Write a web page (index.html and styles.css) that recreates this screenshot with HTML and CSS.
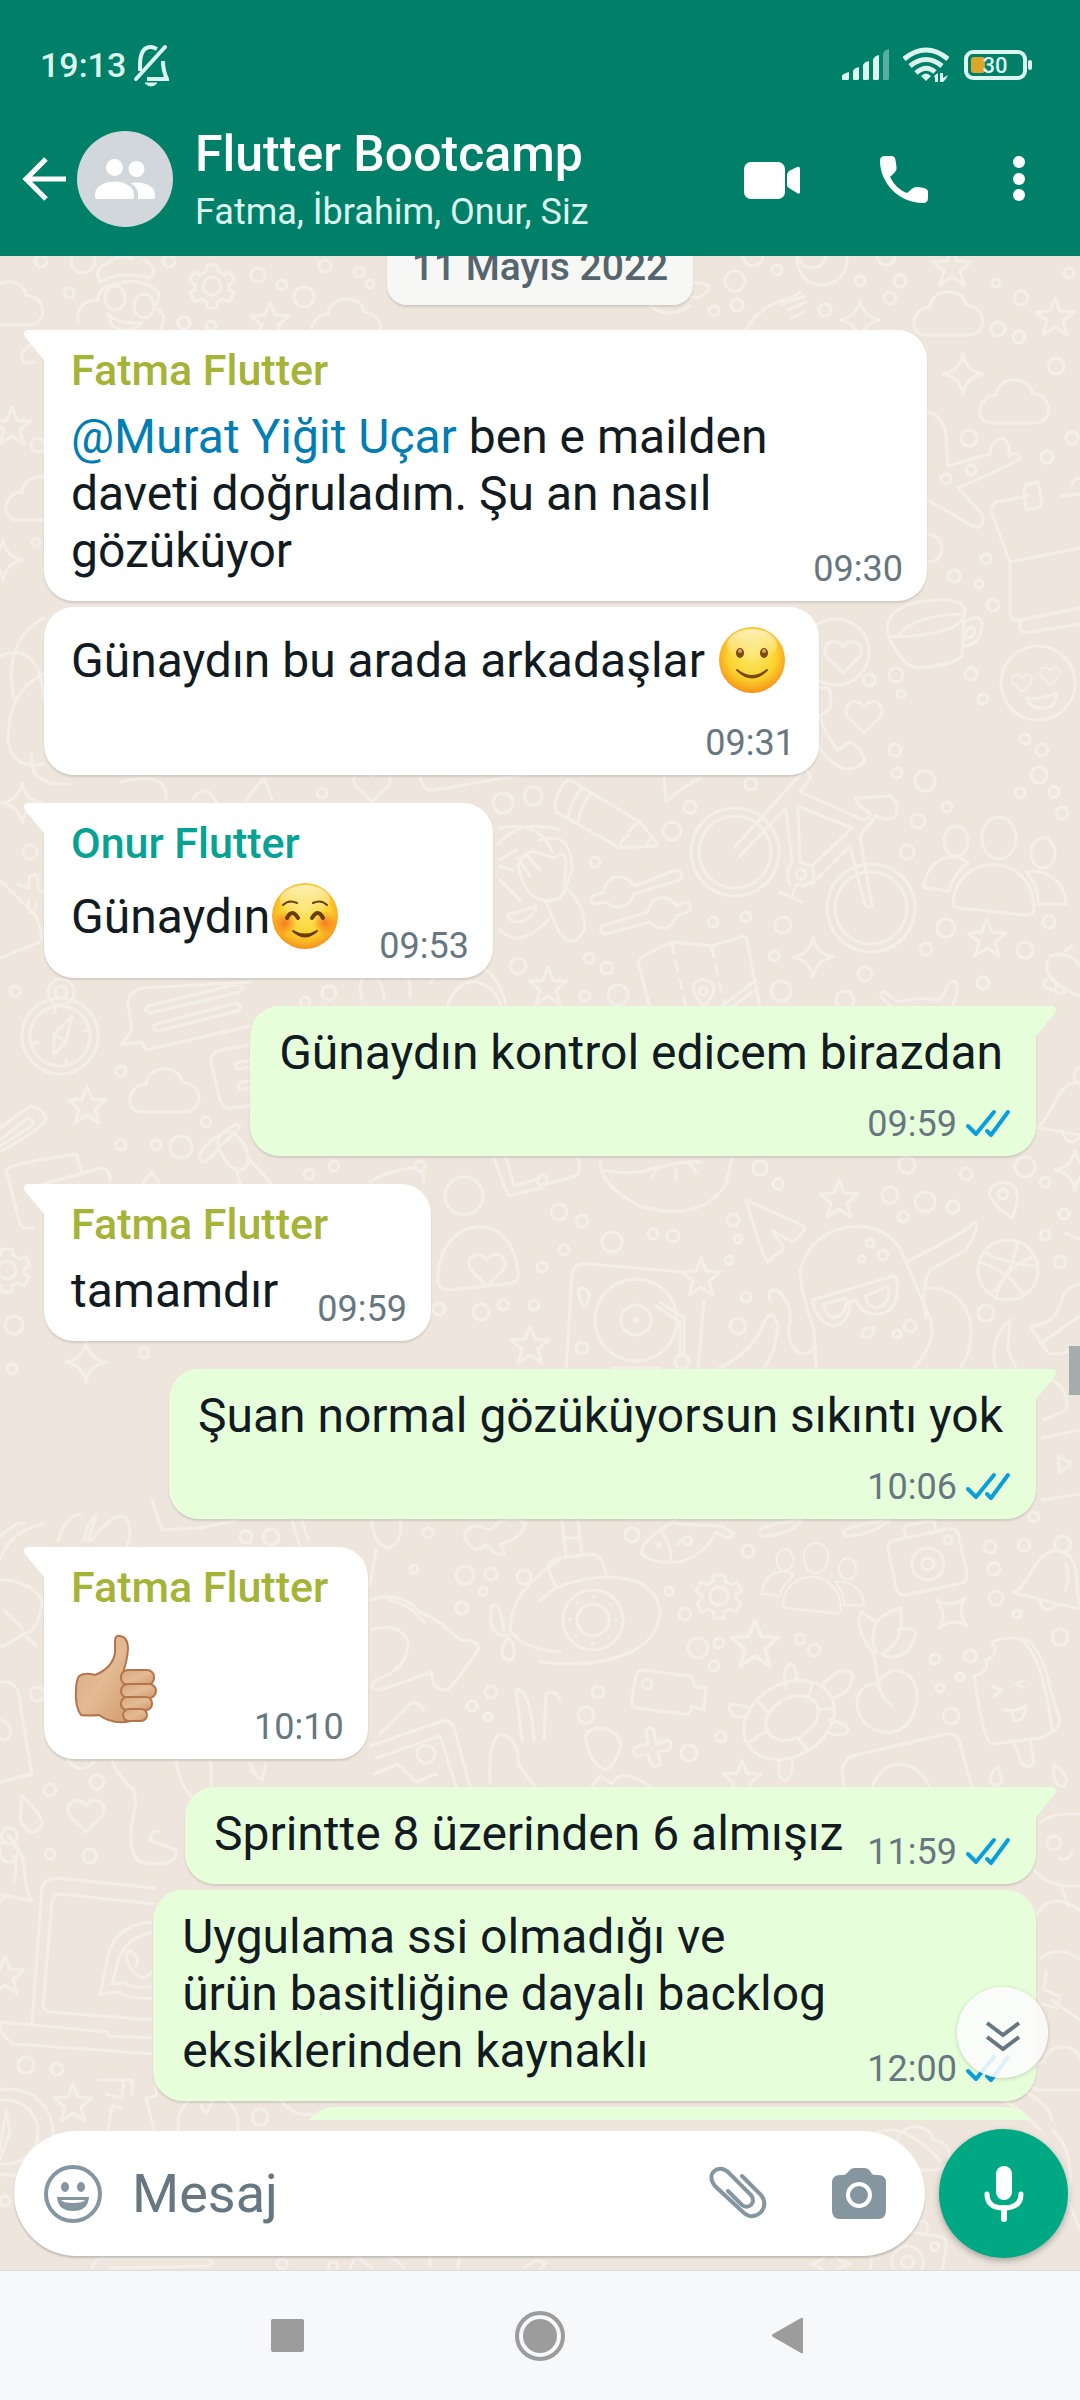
FILE: index.html
```html
<!DOCTYPE html>
<html lang="tr">
<head>
<meta charset="utf-8">
<meta name="viewport" content="width=device-width, initial-scale=1">
<title>Flutter Bootcamp</title>
<link rel="stylesheet" href="styles.css">
</head>
<body>
<svg class="defs" aria-hidden="true">
  <defs>
    <radialGradient id="face" cx="50%" cy="42%" r="60%">
      <stop offset="0" stop-color="#fbe66c"/><stop offset=".6" stop-color="#fbd42f"/><stop offset=".85" stop-color="#f9a91f"/><stop offset="1" stop-color="#f08a1c"/>
    </radialGradient>
    <linearGradient id="shine" x1="0" y1="0" x2="0" y2="1">
      <stop offset="0" stop-color="#fff" stop-opacity=".65"/><stop offset="1" stop-color="#fff" stop-opacity="0"/>
    </linearGradient>
    <radialGradient id="blush">
      <stop offset="0" stop-color="#f86a1c" stop-opacity=".85"/><stop offset="1" stop-color="#f86a1c" stop-opacity="0"/>
    </radialGradient>
    <linearGradient id="skin" x1="0" y1="0" x2="1" y2="1">
      <stop offset="0" stop-color="#d9a67c"/><stop offset=".5" stop-color="#e3bb94"/><stop offset="1" stop-color="#d29a6d"/>
    </linearGradient>
    <symbol id="ticks" viewBox="0 0 46 30">
      <path d="M3 17l8 8L29 3M22 22l4 4L43 3" fill="none" stroke="#0c9ddb" stroke-width="4" stroke-linecap="round" stroke-linejoin="round"/>
    </symbol>
    <path id="star" d="M0-20L5-7 19-6 8 3 12 17 0 9-12 17-8 3-19-6-5-7Z"/>
    <path id="spark" d="M0-20Q3-3 20 0Q3 3 0 20Q-3 3-20 0Q-3-3 0-20Z"/>
    <path id="cloud" d="M-24 20C-42 16-34-8-18-8C-16-28 16-28 18-10C40-8 40 20 20 20Z"/>
    <path id="heart" d="M0 18L-16 2C-24-10-8-20 0-8C8-20 24-10 16 2Z"/>
    <g id="gear"><path d="M-5-21H5L6-15 12-11 18-14 23-5 17-1V3L22 7 17 16 11 13 5 16V22H-5V16L-11 13-17 16-22 7-17 3V-1L-23-5-18-14-12-11-6-15Z"/><circle r="9"/></g>
    <g id="people"><ellipse cx="4" cy="-28" rx="17" ry="21"/><ellipse cx="-39" cy="-25" rx="12" ry="15"/><ellipse cx="48" cy="-13" rx="12" ry="15"/><path d="M-42 37C-38-15 36-15 39 41C40 48 36 49 30 49L-36 42Q-42 41-42 37ZM-71 20C-68-8-40-16-27-3Q-42 8-46 25L-66 22Q-72 22-71 20ZM31 6C50 2 70 14 71 38L43 38Q44 20 31 6Z"/></g>
    <g id="camera"><rect x="-36" y="-26" width="72" height="56" rx="8"/><path d="M-16-26V-34Q-16-38-11-38H10Q15-38 15-34V-26"/><circle cy="4" r="16"/><circle cy="4" r="6"/><circle cx="25" cy="-15" r="4"/></g>
    <g id="bell"><path d="M-36 24C-20 12-26-26 0-28C26-26 20 12 36 24Z"/><circle cy="-35" r="8"/><path d="M-9 25Q0 40 9 25M8-16Q16-6 14 10"/></g>
  </defs>
</svg>
<div class="app">
  <header class="top">
    <div class="status">
      <span class="clock">19:13</span>
      <svg class="mute" viewBox="0 0 36 48" aria-label="Sessiz"><path d="M7 30V24C7 14 10 6 18 6C20 6 22 7 24 8M30 20C30 26 32 34 34 38H14" fill="none" stroke="#dcf5ef" stroke-width="4"/><path d="M3 38L32 6" stroke="#dcf5ef" stroke-width="4" stroke-linecap="round"/><path d="M12 42H24Q18 48 12 42" fill="#dcf5ef" stroke="#dcf5ef"/></svg>
      <svg class="signal" viewBox="0 0 48 32" aria-label="Sinyal"><g fill="#dcf5ef"><path d="M0 30V27Q0 25 7 23V30Q7 31 5 31H1Q0 31 0 30ZM11 30V22Q12 19 17 18V30Q17 31 15 31H12Q11 31 11 30ZM21 30V16Q22 13 27 12V30Q27 31 25 31H22Q21 31 21 30ZM31 30V11Q32 7 37 6V30Q37 31 35 31H32Q31 31 31 30Z"/><path opacity=".4" d="M41 30V5Q42 1 47 0V30Q47 31 45 31H42Q41 31 41 30Z"/></g></svg>
      <svg class="wifi" viewBox="0 0 46 36" aria-label="Wi-Fi"><g fill="none" stroke="#dcf5ef" stroke-width="5"><path d="M1 12Q23-6 45 12M7 19Q23 6 39 19M13 26Q23 17 32 25"/></g><path d="M23 34L18 29Q23 24 28 29ZM31 29L35 26V35H32V31ZM37 35V26H40V31L45 28Q43 33 40 35Z" fill="#dcf5ef"/></svg>
      <svg class="battery" viewBox="0 0 70 32" aria-label="Pil"><rect x="3" y="3" width="59" height="26" rx="7" fill="none" stroke="#dcf5ef" stroke-width="4"/><rect x="8" y="8" width="14" height="16" rx="3" fill="#dea52b"/><rect x="65" y="11" width="4" height="10" rx="2" fill="#dcf5ef"/><text x="32" y="24" text-anchor="middle">30</text></svg>
    </div>
    <div class="bar">
      <button class="back" aria-label="Geri"><svg viewBox="0 0 44 44"><path d="M24 2L4 22L24 42M4 22H44" fill="none" stroke="#fff" stroke-width="5"/></svg></button>
      <svg class="avatar" viewBox="0 0 96 96" aria-hidden="true"><circle cx="48" cy="48" r="48" fill="#d1d7db"/><g fill="#fff"><circle cx="37.500" cy="36.500" r="8.500"/><circle cx="59.500" cy="38" r="8"/><path d="M18 64C18 46 57 46 57 64V66Q57 68 55 68H20Q18 68 18 66ZM61 68Q63 58 54 52C66 50 78 55 78 63V66Q78 68 76 68Z"/></g></svg>
      <div class="titles">
        <h1>Flutter Bootcamp</h1>
        <p>Fatma, İbrahim, Onur, Siz</p>
      </div>
      <button class="act" aria-label="Görüntülü arama"><svg viewBox="0 0 60 60"><rect x="2" y="13" width="41" height="37" rx="7" fill="#fff"/><path d="M45 26Q45 24 47 22L55 18Q58 17 58 20V43Q58 46 55 44L47 39Q45 38 45 36Z" fill="#fff"/></svg></button>
      <button class="act" aria-label="Sesli arama"><svg viewBox="0 0 60 60"><path d="M11 7H17Q21 7 21.500 11L22.500 18Q23 21 21 23L16 28Q22 40 33 44L39 39Q41 38 44 38L50 39Q54 40 54 43V49Q54 54 49 54C25 54 6 34 6 12Q6 7 11 7Z" fill="#fff"/></svg></button>
      <button class="act act-menu" aria-label="Diğer seçenekler"><svg viewBox="0 0 26 60"><g fill="#fff"><circle cx="13" cy="13" r="6"/><circle cx="13" cy="30" r="6"/><circle cx="13" cy="46" r="6"/></g></svg></button>
    </div>
  </header>

  <main class="chat">
    <svg class="wallpaper" viewBox="0 256 1080 2014" preserveAspectRatio="xMidYMin slice" aria-hidden="true">
      <g fill="none" stroke="#f4eee8" stroke-width="3" stroke-linejoin="round" stroke-linecap="round">
        <!-- loose dots -->
        <circle cx="41" cy="261" r="6"/><circle cx="83" cy="261" r="12"/><circle cx="169" cy="261" r="6"/><circle cx="258" cy="275" r="7"/><circle cx="282" cy="285" r="5"/><circle cx="325" cy="266" r="6"/><circle cx="359" cy="272" r="5"/><circle cx="370" cy="284" r="4"/><circle cx="304" cy="297" r="10"/><circle cx="69" cy="293" r="5"/><circle cx="184" cy="323" r="6"/><circle cx="211" cy="326" r="5"/>
        <circle cx="753" cy="256" r="10"/><circle cx="777" cy="270" r="5"/><circle cx="735" cy="281" r="10"/><circle cx="822" cy="260" r="25"/><circle cx="812" cy="254" r="14"/><circle cx="860" cy="281" r="5"/><circle cx="900" cy="281" r="6"/><circle cx="890" cy="298" r="6"/><circle cx="825" cy="310" r="6"/><circle cx="737" cy="305" r="6"/><circle cx="714" cy="311" r="5"/><circle cx="1021" cy="298" r="7"/><circle cx="1069" cy="273" r="5"/><circle cx="996" cy="283" r="4"/><circle cx="886" cy="256" r="9"/>
        <circle cx="998" cy="329" r="7"/><circle cx="1019" cy="337" r="6"/><circle cx="1056" cy="366" r="8"/><circle cx="969" cy="438" r="8"/><circle cx="1072" cy="438" r="6"/><circle cx="1047" cy="457" r="6"/><circle cx="971" cy="470" r="5"/><circle cx="946" cy="479" r="5"/><circle cx="986" cy="559" r="5"/><circle cx="954" cy="576" r="6"/><circle cx="979" cy="584" r="4"/><circle cx="993" cy="605" r="6"/><circle cx="869" cy="680" r="6"/><circle cx="896" cy="675" r="7"/><circle cx="901" cy="694" r="4"/><circle cx="971" cy="674" r="6"/><circle cx="983" cy="699" r="5"/><circle cx="1025" cy="739" r="5"/><circle cx="1042" cy="750" r="6"/><circle cx="895" cy="750" r="6"/><circle cx="897" cy="773" r="5"/><circle cx="925" cy="781" r="10"/><circle cx="1039" cy="775" r="8"/><circle cx="1020" cy="793" r="5"/><circle cx="1054" cy="792" r="5"/>
        <circle cx="751" cy="784" r="6"/><circle cx="533" cy="796" r="9"/><circle cx="503" cy="803" r="10"/><circle cx="690" cy="807" r="6"/><circle cx="672" cy="831" r="9"/><circle cx="595" cy="862" r="5"/><circle cx="947" cy="807" r="5"/><circle cx="918" cy="821" r="7"/><circle cx="1062" cy="813" r="6"/><circle cx="907" cy="852" r="7"/><circle cx="713" cy="922" r="5"/><circle cx="746" cy="917" r="5"/><circle cx="783" cy="925" r="8"/><circle cx="774" cy="956" r="5"/><circle cx="946" cy="928" r="9"/><circle cx="926" cy="949" r="6"/><circle cx="1049" cy="922" r="6"/><circle cx="1025" cy="950" r="8"/><circle cx="589" cy="958" r="5"/><circle cx="607" cy="968" r="6"/><circle cx="518" cy="966" r="8"/><circle cx="585" cy="996" r="5"/><circle cx="618" cy="995" r="10"/><circle cx="781" cy="991" r="10"/><circle cx="865" cy="974" r="7"/><circle cx="983" cy="983" r="6"/><circle cx="845" cy="1000" r="9"/>
        <circle cx="760" cy="1168" r="7"/><circle cx="907" cy="1165" r="8"/><circle cx="966" cy="1174" r="6"/><circle cx="1025" cy="1167" r="10"/><circle cx="1045" cy="1182" r="5"/><circle cx="890" cy="1195" r="8"/><circle cx="925" cy="1202" r="10"/><circle cx="953" cy="1207" r="6"/><circle cx="903" cy="1217" r="5"/><circle cx="1064" cy="1214" r="5"/><circle cx="778" cy="1184" r="5"/><circle cx="559" cy="1212" r="8"/><circle cx="582" cy="1221" r="6"/><circle cx="653" cy="1234" r="5"/><circle cx="673" cy="1236" r="6"/><circle cx="612" cy="1242" r="10"/><circle cx="733" cy="1220" r="6"/><circle cx="738" cy="1239" r="4"/><circle cx="729" cy="1260" r="4"/><circle cx="564" cy="1250" r="5"/><circle cx="746" cy="1297" r="5"/><circle cx="738" cy="1326" r="8"/><circle cx="582" cy="1348" r="6"/><circle cx="986" cy="1313" r="8"/><circle cx="1045" cy="1235" r="5"/><circle cx="1060" cy="1262" r="6"/>
        <circle cx="632" cy="1535" r="7"/><circle cx="748" cy="1551" r="6"/><circle cx="669" cy="1591" r="4"/><circle cx="685" cy="1614" r="6"/><circle cx="698" cy="1648" r="10"/><circle cx="719" cy="1643" r="5"/><circle cx="714" cy="1666" r="5"/><circle cx="800" cy="1639" r="5"/><circle cx="814" cy="1650" r="6"/><circle cx="598" cy="1692" r="6"/><circle cx="586" cy="1715" r="8"/><circle cx="721" cy="1737" r="5"/><circle cx="689" cy="1753" r="8"/><circle cx="990" cy="1547" r="6"/><circle cx="1024" cy="1545" r="6"/><circle cx="994" cy="1569" r="6"/><circle cx="996" cy="1598" r="7"/><circle cx="1017" cy="1614" r="4"/><circle cx="1060" cy="1637" r="8"/><circle cx="935" cy="1659" r="5"/><circle cx="970" cy="1656" r="6"/><circle cx="960" cy="1677" r="4"/><circle cx="940" cy="1688" r="4"/><circle cx="951" cy="1716" r="8"/><circle cx="1034" cy="1517" r="5"/>
        <circle cx="322" cy="793" r="5"/><circle cx="30" cy="852" r="7"/><circle cx="15" cy="991" r="5"/><circle cx="329" cy="993" r="7"/><circle cx="305" cy="1002" r="5"/><circle cx="121" cy="1071" r="5"/><circle cx="206" cy="1122" r="5"/><circle cx="121" cy="1145" r="5"/><circle cx="156" cy="1145" r="5"/><circle cx="181" cy="1147" r="11"/><circle cx="309" cy="1174" r="5"/><circle cx="334" cy="1166" r="5"/><circle cx="420" cy="1166" r="5"/><circle cx="542" cy="1180" r="5"/><circle cx="542" cy="1267" r="5"/><circle cx="439" cy="1309" r="6"/><circle cx="481" cy="1312" r="8"/><circle cx="503" cy="1305" r="5"/><circle cx="534" cy="1305" r="5"/><circle cx="14" cy="1325" r="9"/><circle cx="144" cy="1353" r="5"/><circle cx="12" cy="1369" r="5"/>
        <circle cx="246" cy="1537" r="6"/><circle cx="271" cy="1537" r="8"/><circle cx="428" cy="1533" r="5"/><circle cx="414" cy="1569" r="4"/><circle cx="465" cy="1575" r="9"/><circle cx="491" cy="1574" r="6"/><circle cx="524" cy="1577" r="7"/><circle cx="483" cy="1591" r="4"/><circle cx="462" cy="1608" r="6"/><circle cx="491" cy="1692" r="6"/><circle cx="472" cy="1706" r="5"/><circle cx="488" cy="1717" r="4"/><circle cx="50" cy="1790" r="6"/><circle cx="97" cy="1782" r="7"/><circle cx="50" cy="1854" r="5"/><circle cx="90" cy="1856" r="7"/><circle cx="37" cy="1694" r="7"/><circle cx="26" cy="2065" r="8"/><circle cx="57" cy="2069" r="6"/><circle cx="260" cy="2117" r="8"/><circle cx="5" cy="2201" r="5"/><circle cx="282" cy="2264" r="5"/><circle cx="333" cy="2267" r="5"/><circle cx="36" cy="542" r="4"/><circle cx="38" cy="445" r="7"/>
        <!-- stars and sparkles -->
        <use href="#star" x="270" y="322"/><use href="#star" x="952" y="268"/><use href="#star" x="1055" y="318"/><use href="#star" x="12" y="427"/><use href="#star" x="987" y="939"/><use href="#star" x="548" y="987"/><use href="#star" x="87" y="1106"/><use href="#star" x="530" y="1346"/><use href="#star" x="839" y="1200"/><use href="#star" x="701" y="1278"/><use href="#star" transform="translate(755 1645) scale(1.25)"/><use href="#star" x="5" y="1976"/><use href="#star" x="73" y="2104"/><use href="#star" x="742" y="1780"/>
        <use href="#spark" x="860" y="320"/><use href="#spark" x="963" y="374"/><use href="#spark" x="813" y="957"/><use href="#spark" x="22" y="803"/><use href="#spark" x="86" y="1362"/><use href="#spark" transform="translate(952 1613) rotate(40)"/><use href="#spark" x="3" y="560"/><use href="#spark" x="1075" y="1170"/><use href="#spark" x="830" y="2264"/>
        <!-- clouds, hearts, gears -->
        <use href="#cloud" x="8" y="305"/><use href="#cloud" x="346" y="322"/><use href="#cloud" x="948" y="315"/><use href="#cloud" x="1014" y="403"/><use href="#cloud" x="164" y="1092"/><use href="#cloud" x="40" y="500"/><use href="#cloud" x="1062" y="2070"/><use href="#cloud" x="915" y="2150"/>
        <use href="#heart" x="843" y="655"/><use href="#heart" x="864" y="715"/><use href="#heart" x="86" y="1814"/><use href="#heart" x="487" y="1268"/><use href="#heart" x="372" y="784"/>
        <use href="#gear" x="212" y="286"/><use href="#gear" x="7" y="1270"/><use href="#gear" x="719" y="1596"/>
        <!-- people, cameras, bells -->
        <use href="#people" x="995" y="866"/><use href="#people" transform="translate(813 1578) scale(.72)"/>
        <use href="#camera" transform="translate(927 1560) rotate(-12)"/><use href="#camera" transform="translate(908 2258) rotate(8)"/>
        <use href="#bell" transform="translate(1054 1578) rotate(14)"/><use href="#bell" transform="translate(2 1870) rotate(12)"/><use href="#bell" transform="translate(1076 1110) rotate(10)"/>
        <!-- cupcake -->
        <path d="M100 282Q92 268 110 262Q116 254 132 258M100 282Q120 270 150 278Q160 268 144 260M78 322Q76 300 98 300M98 300Q98 286 116 284Q140 276 158 292Q160 302 154 308Q170 314 160 330"/><ellipse cx="115" cy="298" rx="10" ry="12"/><ellipse cx="144" cy="306" rx="10" ry="12"/><path d="M108 314Q120 326 142 322Q132 336 112 326Z"/>
        <!-- spoon and ring -->
        <path d="M746 330Q758 306 790 298L800 292M782 304L804 296M788 310L806 302M792 318L804 312M685 282Q706 282 710 288Q700 302 690 296M650 306Q668 320 690 306"/>
        <!-- tulip, letter and calendar -->
        <path d="M928 412Q944 416 946 436L948 466L990 454Q990 440 1004 438Q1012 448 1008 456Q1018 450 1020 458Q1014 464 958 488L982 514Q986 526 976 528L928 500M928 534Q942 536 942 550Q940 562 928 562"/>
        <path d="M1080 494L1062 496M1028 496L996 502Q990 506 992 514L1010 562V612Q1010 622 1020 620L1080 608M1010 562L1080 548M1020 620V628Q1022 634 1030 632L1080 624M1024 490Q1024 484 1030 484L1038 482L1042 504Q1040 508 1034 508L1026 510ZM1072 484Q1074 478 1080 478"/>
        <!-- mug -->
        <path d="M888 634C884 612 904 602 936 600C960 598 970 606 962 620C950 634 910 638 888 636ZM898 636Q912 616 960 614M888 636Q904 668 918 668Q950 666 962 656L964 620M964 622Q980 612 982 624Q982 644 964 646M966 634Q966 626 974 628Q976 638 966 638Z"/>
        <!-- love-struck face and handset -->
        <circle cx="1038" cy="683" r="37"/><use href="#heart" transform="translate(1022 682) scale(.55)"/><use href="#heart" transform="translate(1050 675) scale(.55)"/><path d="M1026 698Q1040 700 1056 693Q1058 706 1044 708Q1032 710 1026 698Z"/>
        <circle cx="836" cy="652" r="33"/><path d="M818 688H828Q832 692 830 708L820 716Q824 734 838 750L850 742Q860 746 865 760Q856 772 842 768Q824 760 816 740"/>
        <!-- pencil -->
        <path d="M570 780L640 822L656 842Q658 848 650 846L620 848L556 812Q552 804 562 786Q566 780 570 780ZM640 822Q630 826 628 836Q620 840 620 848M592 792Q580 806 578 822M582 788Q570 802 568 818M648 844L652 836"/>
        <path d="M664 776L666 802Q686 784 700 778"/>
        <!-- bicycle -->
        <circle cx="735" cy="852" r="44"/><circle cx="735" cy="852" r="36"/><circle cx="871" cy="908" r="44"/><circle cx="871" cy="908" r="36"/>
        <path d="M734 848L804 770Q812 772 810 778L800 792L864 820Q874 816 868 812M868 812Q854 802 856 798L890 796Q900 802 896 816Q890 822 876 816L860 836L872 906Q868 910 864 902L850 846L812 884M798 806L852 828L812 866L800 862ZM786 810L792 862M740 856L786 808"/><circle cx="801" cy="874" r="5"/><path d="M792 862Q784 872 790 884M812 868Q818 880 804 886L796 884M780 892L802 902M796 884L792 898"/>
        <!-- sliders -->
        <path d="M592 896L604 892C606 872 628 874 634 886L676 870Q686 872 680 880L634 894C628 912 612 908 606 902L594 904Q588 900 592 896ZM602 926L648 912C652 892 672 896 676 906L686 902Q694 906 688 912L676 916C672 932 656 930 650 922L606 934Q598 932 602 926Z"/>
        <!-- waving grandma -->
        <path d="M500 828Q540 820 552 852M540 840Q572 830 572 870L566 886Q562 904 542 900Q524 896 518 866Q524 850 536 852L554 858Q564 850 566 860L564 886Q588 908 584 930Q572 952 558 930L546 902M518 858L530 876M526 854L540 870M500 866L512 870M508 914Q520 912 536 906Q532 922 516 922Q508 920 508 914M500 930Q520 950 548 920"/>
        <!-- map -->
        <path d="M650 1008L638 962Q640 956 672 942L712 946L744 936Q748 938 748 946L760 1008M722 1006L756 980M730 1008L758 988"/><path d="M672 944L686 1008M712 948L724 1004" stroke-dasharray="9 9"/><path d="M703 1006Q690 990 694 984Q704 974 714 986Q714 998 703 1006Z"/><circle cx="703" cy="991" r="4"/>
        <path d="M894 1008Q874 994 884 992L898 1002Q920 996 940 1000L950 982Q960 978 956 996L952 1008M1050 956Q1070 950 1080 966M1048 960Q1040 980 1080 996M1064 952L1072 946M1046 980Q1040 986 1052 990M1056 986Q1052 996 1064 992"/>
        <!-- compass -->
        <circle cx="60" cy="1036" r="38"/><circle cx="60" cy="1036" r="30"/><circle cx="61" cy="992" r="13"/><circle cx="61" cy="992" r="6"/><path d="M72 1016L66 1042L54 1054L54 1034ZM54 1034L66 1042M55 1006V1012M32 1043L38 1042M84 1031L90 1030M66 1060V1066"/>
        <!-- speech bubbles -->
        <path d="M250 982L142 988Q128 992 128 1004L132 1030L122 1044L142 1042L146 1050L250 1026M148 1006L238 984Q246 988 240 992L150 1013Q142 1010 148 1006ZM156 1024L236 1003Q244 1006 238 1011L158 1031Q150 1028 156 1024ZM256 1044L220 1050Q208 1054 212 1066L220 1100Q224 1110 232 1108L260 1104M256 1060L238 1062Q232 1066 238 1069L256 1066M256 1080L240 1082Q236 1088 242 1090L256 1086"/>
        <path d="M0 1128L30 1106Q44 1108 46 1120Q42 1128 0 1152M0 1140L28 1118Q36 1120 32 1126L0 1146"/>
        <!-- dragonfly and cards -->
        <path d="M200 1160Q196 1154 214 1138L236 1124Q242 1124 238 1130L220 1146Q204 1168 200 1160ZM218 1142Q218 1130 232 1132Q250 1146 248 1164Q240 1176 230 1166Q218 1152 218 1142ZM236 1168L240 1184M248 1158L272 1184M6 1170Q8 1164 76 1154L82 1172M6 1170L20 1224Q24 1230 34 1228M30 1188L100 1168Q110 1168 110 1180M142 1184L152 1172L160 1184M370 1182Q380 1174 410 1168Q424 1168 424 1182M494 1158L508 1196L542 1188M506 1158L514 1186L540 1178"/>
        <circle cx="464" cy="1196" r="19"/><path d="M438 1276C440 1216 512 1206 518 1272Q520 1284 504 1284L450 1290Q436 1290 438 1276Z"/>
        <!-- upper left scribbles -->
        <path d="M44 336Q26 346 22 354Q20 366 34 362M44 618Q2 640 14 700M0 656Q40 640 44 700M44 674Q8 690 8 740Q12 770 44 764M32 752Q26 786 70 784M120 782Q170 770 166 800M192 800Q206 780 216 802M246 800L264 778L272 800M420 778Q424 792 434 790L540 772M0 880L36 916Q44 936 40 942L0 958M18 884L28 888L30 876Q36 872 38 880L38 890L44 892M28 900L30 912Q36 912 36 904"/>
        <path d="M498 844Q520 818 560 830M500 860L516 850M500 880L520 900M430 983Q452 956 486 970Q500 980 506 1004M448 1004Q458 980 476 982Q494 986 500 1004M362 1000Q356 974 372 974Q384 982 384 1000M396 968Q412 972 410 996"/>
        <!-- lips and wave -->
        <path d="M600 1162Q600 1186 640 1206Q700 1224 726 1184L732 1158M602 1170Q630 1176 656 1168Q690 1160 700 1162M652 1178L656 1168M676 1180V1170M696 1172L690 1164M540 1186L576 1176Q582 1170 578 1158"/>
        <!-- turntable -->
        <path d="M566 1370L572 1274Q574 1262 588 1264L684 1272M704 1300L698 1370M612 1368H660"/><circle cx="636" cy="1320" r="41"/><circle cx="636" cy="1320" r="15"/><circle cx="636" cy="1320" r="2"/><path d="M660 1302L684 1318V1354M656 1306L680 1322V1354M582 1288Q576 1290 580 1298Q582 1308 586 1306Q594 1290 582 1288"/><circle cx="682" cy="1362" r="7"/>
        <!-- paper plane -->
        <path d="M746 1200L804 1226Q806 1232 792 1242L772 1230L784 1248L768 1262Q764 1262 746 1200Z"/>
        <!-- cool ghost -->
        <path d="M816 1368L814 1330Q800 1290 800 1270Q812 1228 860 1226Q896 1230 906 1262L930 1318Q938 1340 914 1368M906 1262Q970 1230 974 1222Q982 1224 966 1250L930 1270Q920 1290 926 1318M926 1288Q960 1286 970 1320Q974 1350 960 1368M812 1300L894 1276Q900 1280 896 1300Q890 1316 872 1314Q860 1312 856 1300L850 1302Q850 1322 834 1326Q818 1324 812 1300ZM824 1304L846 1298Q848 1314 834 1318Q824 1314 824 1304ZM866 1296L888 1286Q892 1304 876 1308Q866 1306 866 1296Z"/><circle cx="870" cy="1243" r="4"/><circle cx="883" cy="1255" r="5"/><circle cx="862" cy="1259" r="3"/><circle cx="910" cy="1326" r="6"/><circle cx="897" cy="1334" r="4"/><path d="M862 1336Q862 1326 874 1328Q872 1342 862 1336ZM770 1300Q766 1290 776 1290Q792 1300 790 1322Q784 1340 800 1354Q812 1354 816 1344M716 1370Q756 1350 764 1322Q772 1306 778 1326L774 1350L764 1368"/>
        <!-- basketball and pin -->
        <circle cx="1008" cy="1270" r="30"/><path d="M1018 1242Q1010 1280 990 1294M980 1262Q1010 1272 1024 1296M984 1252Q1000 1262 1036 1266M1034 1256Q1000 1270 996 1298"/><path d="M1012 1218Q986 1200 990 1190Q1000 1176 1016 1188Q1020 1200 1012 1218Z"/><circle cx="1003" cy="1194" r="5"/>
        <path d="M1030 1326Q1054 1326 1062 1300Q1064 1288 1080 1284M1030 1326L1046 1350Q1052 1360 1080 1346M1040 1344L1080 1316M1010 1320Q988 1340 996 1368M1010 1320L1008 1350L1016 1368M1064 1232L1080 1240M1058 1456L1072 1464L1060 1472ZM1042 1438L1080 1430M1042 1500L1080 1494M1052 1380Q1070 1390 1066 1410L1044 1420"/>
        <!-- submarine -->
        <path d="M540 1600L556 1588L548 1568Q548 1560 560 1558L590 1554Q604 1554 606 1576M556 1588C600 1570 656 1572 660 1612C658 1650 610 1670 540 1662M566 1556L562 1520M582 1554L578 1520M564 1538H578"/><circle cx="593" cy="1620" r="30"/><circle cx="593" cy="1620" r="16"/><circle cx="593" cy="1620" r="23" stroke-dasharray="1 17"/>
        <!-- fish -->
        <path d="M642 1554Q640 1544 660 1530L676 1520M642 1554Q652 1564 680 1562Q706 1554 716 1532Q730 1542 734 1534L722 1526L676 1524M660 1530Q674 1548 670 1562M678 1544Q690 1530 692 1542Q686 1548 684 1542M760 1532Q756 1526 800 1520M760 1536Q790 1536 802 1520M844 1534Q840 1526 890 1520M846 1536Q870 1536 890 1520"/><circle cx="659" cy="1545" r="2"/>
        <!-- camcorder -->
        <path d="M642 1670L690 1676Q694 1678 694 1686L706 1688L704 1710L692 1706Q690 1716 684 1714L636 1708Q630 1706 632 1698L636 1676Q638 1670 642 1670Z"/><circle cx="647" cy="1684" r="5"/>
        <!-- turtle -->
        <ellipse cx="789" cy="1720" rx="48" ry="36" transform="rotate(-30 789 1720)"/><ellipse cx="792" cy="1718" rx="28" ry="20" transform="rotate(-30 792 1718)"/><path d="M823 1684Q846 1662 853 1676Q850 1694 833 1698M786 1688Q782 1664 792 1664Q798 1670 796 1682M750 1708Q724 1700 730 1710Q734 1720 746 1716M830 1720Q850 1724 848 1732Q842 1738 826 1732M780 1760Q776 1780 786 1780Q794 1776 792 1758M812 1684L808 1698M834 1708L818 1710M808 1750L798 1738M750 1742L768 1730M758 1702L770 1714"/>
        <!-- sprout -->
        <path d="M878 1684C892 1656 924 1676 916 1706C908 1738 880 1738 864 1722C848 1700 862 1682 878 1684Q880 1696 892 1706M878 1684L874 1654Q852 1626 862 1612L876 1622Q886 1612 900 1608Q906 1640 882 1654M898 1630Q914 1626 916 1634Q908 1662 884 1656M876 1622Q870 1640 876 1652"/>
        <!-- popsicle -->
        <path d="M974 1676Q990 1672 986 1660Q1000 1654 992 1642Q1010 1634 1030 1642Q1044 1656 1050 1688L1060 1720Q1060 1730 1040 1738L992 1744Q984 1744 974 1676ZM1018 1638Q1042 1650 1052 1730M1014 1742L1022 1764Q1030 1770 1034 1762L1030 1740M992 1686L1002 1690L994 1696M1024 1680L1016 1684L1024 1688M1004 1710Q1016 1712 1026 1706Q1024 1724 1014 1720L1012 1712"/>
        <path d="M844 1788L842 1770Q844 1760 852 1756L946 1734Q958 1732 960 1744L972 1788M872 1788Q880 1764 902 1764Q922 1768 930 1788M998 1766L1002 1782Q998 1788 992 1784Q986 1778 998 1766ZM1054 1764Q1072 1778 1064 1786Q1052 1788 1054 1764ZM592 1786L600 1776L612 1784Q620 1766 650 1786M586 1740Q584 1728 604 1728Q624 1736 620 1750Q612 1770 604 1770Q590 1762 586 1740ZM646 1730Q652 1724 654 1732L656 1744L668 1740Q674 1744 668 1750L658 1752L660 1764Q654 1770 650 1762L648 1754L636 1756Q630 1750 638 1746L648 1744Z"/>
        <!-- winking cat -->
        <path d="M1040 1822Q1054 1812 1080 1814M1034 1870Q1050 1888 1080 1886M1062 1888L1068 1906"/><circle cx="1054" cy="1843" r="7"/><path d="M1060 1858Q1068 1862 1072 1852M1036 1916Q1050 1890 1080 1910"/>
        <!-- whale, hands, pictures -->
        <path d="M370 1600Q400 1590 420 1612Q440 1620 460 1640Q480 1640 478 1650Q464 1672 448 1690Q430 1690 432 1672L380 1690Q366 1690 376 1680Q410 1668 408 1640Q396 1622 372 1630M390 1600Q412 1606 424 1622M560 1560Q510 1590 510 1630Q524 1650 560 1652M508 1636Q486 1636 492 1606Q500 1600 504 1630M506 1640Q496 1660 512 1660Q518 1646 508 1638"/>
        <path d="M380 1734L410 1704Q416 1700 424 1710M370 1746L440 1722Q450 1718 454 1728L470 1786M376 1758L440 1736L456 1786M374 1774L398 1764L416 1782L436 1774"/><circle cx="426" cy="1754" r="9"/><path d="M490 1784Q488 1740 500 1734Q520 1738 518 1764L536 1788M522 1740L516 1690Q526 1686 532 1720L534 1740M544 1740L546 1694Q554 1688 560 1700M372 1522Q374 1546 390 1548Q404 1540 400 1520M376 1550L370 1584M464 1536Q470 1520 490 1530Q510 1510 526 1524Q520 1540 500 1544Q510 1560 494 1552L486 1544Q474 1558 464 1536ZM292 1520L300 1548M302 1520L308 1540M152 1500L162 1530L200 1528Q230 1522 236 1520"/>
        <path d="M0 1560Q10 1530 44 1524M0 1536Q20 1520 24 1524M58 1540Q66 1516 80 1514M84 1540Q88 1520 96 1516L88 1540Q90 1544 100 1530Q130 1500 130 1536Q126 1560 100 1560M0 1580Q30 1580 42 1600Q40 1630 24 1634L0 1648M24 1634L36 1646M4 1610L22 1628M0 1682Q20 1680 20 1704L32 1774L0 1782M0 1720Q14 1724 10 1736Q6 1742 0 1738M112 1760Q120 1780 134 1790L136 1804Q124 1850 140 1862Q180 1868 176 1850L150 1840Q152 1828 160 1832M176 1760Q180 1790 196 1800M210 1760Q214 1780 208 1800M68 1760Q80 1776 94 1762M22 1796Q44 1816 42 1826Q30 1840 20 1820ZM8 1836Q24 1850 14 1862Q0 1864 0 1850M250 1770L262 1780L266 1764M250 1764L258 1778"/>
        <!-- laptop -->
        <path d="M154 1888L58 1878Q44 1878 42 1888L32 2022M154 1904L60 1894Q54 1894 52 1902L43 2006Q44 2010 50 2012L154 2020M154 2038L108 2036V2032L0 2022Q0 2036 14 2044L154 2054"/><path d="M154 1922Q110 1924 106 1966L100 1994L118 1992Q130 2000 154 1998M154 1932Q120 1938 116 1970L112 1984L124 1982Q134 1990 154 1986M130 1950Q122 1956 132 1970Q142 1984 152 1972M130 1950L138 1958L136 1966"/>
        <!-- clock and pixels near the composer -->
        <circle cx="10" cy="2132" r="43"/><circle cx="6" cy="2132" r="32"/><path d="M0 2150L6 2110L10 2132L0 2160M98 2080H132V2094M106 2094L122 2098L124 2080M110 2112L112 2106L122 2108M156 2078V2096L146 2098L154 2130M108 2130L112 2106"/><circle cx="208" cy="2124" r="30"/><path d="M200 2104L206 2114L212 2102M280 2100Q296 2118 312 2114M92 2268Q96 2256 106 2258H204Q218 2260 208 2266L110 2268M350 2268L356 2256L372 2268M358 2256Q390 2250 404 2268M524 2268L536 2260L546 2262L540 2270M430 2256V2266M460 2256L458 2268M980 2094Q1010 2096 1040 2130M1000 2080Q1050 2100 1052 2120M862 2146Q890 2108 940 2160M1052 2130Q1076 2150 1068 2200L1080 2230M1052 2000L1080 2020M1046 1972L1044 1990L1060 1996L1058 2008L1040 2004M1040 1958Q1060 1944 1080 1960"/>
      </g>
    </svg>

    <section class="history">
      <ol class="messages">
        <li class="day">11 Mayıs 2022</li>
        <li class="msg in first">
          <span class="name fatma">Fatma Flutter</span>
          <div class="row"><p><a href="#murat">@Murat Yiğit Uçar</a> ben e mailden daveti doğruladım. Şu an nasıl gözüküyor</p><time>09:30</time></div>
        </li>
        <li class="msg in">
          <div class="row stacked"><p>Günaydın bu arada arkadaşlar <svg class="emoji" viewBox="0 0 66 66" role="img" aria-label="Gülümseyen yüz"><circle cx="33" cy="33" r="33" fill="url(#face)"/><ellipse cx="33" cy="18" rx="25" ry="16" fill="url(#shine)"/><g fill="#7a4a0c"><ellipse cx="21" cy="26" rx="4" ry="5"/><ellipse cx="45" cy="26" rx="4" ry="5"/></g><g fill="#c9a878"><ellipse cx="21" cy="24" rx="2" ry="2"/><ellipse cx="45" cy="24" rx="2" ry="2"/></g><path d="M18 43Q33 58 48 43Q33 55 18 43Z" fill="#7a4a0c" stroke="#7a4a0c" stroke-width="2" stroke-linejoin="round"/></svg></p><time>09:31</time></div>
        </li>
        <li class="msg in first">
          <span class="name onur">Onur Flutter</span>
          <div class="row"><p>Günaydın<svg class="emoji" viewBox="0 0 66 66" role="img" aria-label="Mutlu yüz"><circle cx="33" cy="33" r="33" fill="url(#face)"/><ellipse cx="33" cy="17" rx="25" ry="15" fill="url(#shine)"/><circle cx="13" cy="40" r="12" fill="url(#blush)"/><circle cx="53" cy="40" r="12" fill="url(#blush)"/><g fill="none" stroke="#6b3d0a" stroke-linecap="round"><path d="M11 22Q17 16 25 20M41 20Q49 16 55 22" stroke-width="2"/><path d="M15 35Q20 25 26 35M40 35Q46 25 51 35" stroke-width="4"/></g><path d="M21 48Q33 59 45 48Q33 55 21 48Z" fill="#6b3d0a" stroke="#6b3d0a" stroke-width="2" stroke-linejoin="round"/></svg></p><time>09:53</time></div>
        </li>
        <li class="msg out first">
          <div class="row stacked"><p>Günaydın kontrol edicem birazdan</p><span class="meta"><time>09:59</time><svg class="ticks" role="img" aria-label="Okundu"><use href="#ticks"/></svg></span></div>
        </li>
        <li class="msg in first">
          <span class="name fatma">Fatma Flutter</span>
          <div class="row"><p>tamamdır</p><time>09:59</time></div>
        </li>
        <li class="msg out first">
          <div class="row stacked"><p>Şuan normal gözüküyorsun sıkıntı yok</p><span class="meta"><time>10:06</time><svg class="ticks" role="img" aria-label="Okundu"><use href="#ticks"/></svg></span></div>
        </li>
        <li class="msg in first">
          <span class="name fatma">Fatma Flutter</span>
          <div class="row"><svg class="thumb" viewBox="0 0 144 112" role="img" aria-label="Başparmak yukarı"><g fill="url(#skin)" stroke="#b5754c" stroke-width="2" stroke-linejoin="round"><path d="M8 51Q14 47 24 50C34 46 42 40 44 28V16Q44 10 49 11Q57 12 57 24Q56 36 53 44L54 50V90Q52 97 60 96C46 99 36 96 28 90Q18 91 10 90Q4 82 5 66Q5 56 8 51Z"/><rect x="50" y="45" width="33" height="15" rx="7"/><rect x="50" y="59" width="35" height="14" rx="7"/><rect x="50" y="72" width="31" height="13" rx="6"/><rect x="52" y="84" width="24" height="12" rx="6"/></g></svg><time>10:10</time></div>
        </li>
        <li class="msg out first">
          <div class="row"><p>Sprintte 8 üzerinden 6 almışız</p><span class="meta"><time>11:59</time><svg class="ticks" role="img" aria-label="Okundu"><use href="#ticks"/></svg></span></div>
        </li>
        <li class="msg out">
          <div class="row"><p>Uygulama ssi olmadığı ve<br>ürün basitliğine dayalı backlog eksiklerinden kaynaklı</p><span class="meta"><time>12:00</time><svg class="ticks" role="img" aria-label="Okundu"><use href="#ticks"/></svg></span></div>
        </li>
        <li class="msg out partial"></li>
      </ol>
      <span class="scrollbar"></span>
      <button class="jump" aria-label="En alta git"><svg viewBox="0 0 91 91"><path d="M30 36L46 48L62 36M30 50L46 62L62 50" fill="none" stroke="#667781" stroke-width="4"/></svg></button>
    </section>

    <form class="composer">
      <div class="field">
        <button type="button" aria-label="Emoji"><svg viewBox="0 0 60 60"><circle cx="30" cy="30" r="27" fill="none" stroke="#8696a0" stroke-width="4"/><g fill="#8696a0"><ellipse cx="22" cy="23" rx="4" ry="5"/><ellipse cx="38" cy="23" rx="4" ry="5"/><path d="M14 33H46Q45 47 30 47Q15 47 14 33Z"/></g><path d="M18 36H42Q40 39 30 39Q20 39 18 36Z" fill="#fff"/></svg></button>
        <input type="text" placeholder="Mesaj" aria-label="Mesaj">
        <button type="button" aria-label="Dosya ekle"><svg viewBox="0 0 60 60"><path d="M34 12L53 31C63 43 48 59 36 49L7 22C-3 10 10-1 20 8L43 31C49 39 40 46 34 41L20 27" fill="none" stroke="#8696a0" stroke-width="4" stroke-linecap="round"/></svg></button>
        <button type="button" class="cam" aria-label="Kamera"><svg viewBox="0 0 60 60"><path d="M20 7Q22 4 26 4H35Q39 4 41 7L43 10Q44 11 47 11H49Q57 11 57 19V46Q57 55 49 55H11Q3 55 3 46V19Q3 11 11 11H13Q16 11 17 10Z" fill="#8696a0"/><circle cx="30" cy="31" r="11" fill="none" stroke="#fff" stroke-width="4"/></svg></button>
      </div>
      <button type="button" class="mic" aria-label="Sesli mesaj"><svg viewBox="0 0 129 129"><rect x="57" y="37" width="16" height="34" rx="8" fill="#fff"/><path d="M48 65Q48 79 65 79Q82 79 82 65" fill="none" stroke="#fff" stroke-width="5" stroke-linecap="round"/><path d="M65 79V90" stroke="#fff" stroke-width="6" stroke-linecap="round"/></svg></button>
    </form>
  </main>

  <nav class="system">
    <button aria-label="Son uygulamalar"><svg viewBox="0 0 60 60"><rect x="11" y="13" width="33" height="33" rx="2" fill="#9c9c9c"/></svg></button>
    <button aria-label="Ana ekran"><svg viewBox="0 0 60 60"><circle cx="30" cy="30" r="23" fill="none" stroke="#9c9c9c" stroke-width="4"/><circle cx="30" cy="30" r="17" fill="#9c9c9c"/></svg></button>
    <button aria-label="Geri git"><svg viewBox="0 0 60 60"><path d="M13 28L41 12Q43 11 43 13V46Q43 48 41 47L13 31Q11 29 13 28Z" fill="#9c9c9c"/></svg></button>
  </nav>
</div>
</body>
</html>
```
FILE: styles.css
```css
* { box-sizing: border-box; margin: 0; padding: 0; }
body { font-family: Roboto, "Noto Sans", sans-serif; color: #111b21; }
button { display: block; flex: none; border: 0; background: none; cursor: pointer; }
svg { display: block; flex: none; }
.defs { position: absolute; width: 0; height: 0; }

.app { display: flex; flex-direction: column; height: 100vh; overflow: hidden; }

/* header */
.top { flex: none; background: #008069; }
.status { display: flex; align-items: center; height: 102px; padding: 28px 47px 0 40px; }
.clock { color: #dcf5ef; font-size: 34px; line-height: 40px; font-weight: 500; }
.mute { width: 36px; height: 48px; margin-left: 7px; }
.signal { width: 48px; height: 32px; margin-left: auto; }
.wifi { width: 46px; height: 36px; margin-left: 13px; }
.battery { width: 70px; height: 32px; margin-left: 14px; }
.battery text { fill: #dcf5ef; font-size: 22px; font-weight: 500; }
.bar { display: flex; align-items: center; height: 154px; padding: 0 48px 0 22px; }
.back svg { width: 44px; height: 44px; }
.avatar { width: 96px; height: 96px; margin: 0 22px 0 11px; }
.titles { flex: 1; min-width: 0; white-space: nowrap; }
h1 { color: #fff; font-size: 50px; line-height: 58px; font-weight: 500; }
.titles p { margin-top: 8px; color: #dcf5ef; font-size: 36px; line-height: 42px; }
.act svg { width: 60px; height: 60px; }
.act + .act { margin-left: 72px; }
.act-menu svg { width: 26px; }

/* conversation */
.chat { position: relative; flex: 1; min-height: 0; display: flex; flex-direction: column; background: #eee6dd; }
.wallpaper { position: absolute; top: 0; left: 0; width: 100%; height: 100%; }
.history { position: relative; flex: 1; min-height: 0; overflow: hidden; }
.messages { display: flex; flex-direction: column; align-items: flex-start; list-style: none; padding: 0 44px; }
.day { align-self: center; margin-top: -23px; padding: 10px 25px 14px; border-radius: 20px; background: #f7f7f5; color: #54656f; font-size: 39px; line-height: 48px; font-weight: 500; box-shadow: 0 2px 2px rgba(11, 20, 26, .12); }
.msg { position: relative; max-width: 89%; margin-top: 6px; padding: 18px 24px 11px 27px; border-radius: 30px; background: #fff; box-shadow: 0 2px 2px rgba(11, 20, 26, .12); }
.msg.first { margin-top: 28px; }
.messages .day + .msg { margin-top: 25px; }
.out { align-self: flex-end; padding-right: 25px; padding-left: 29px; background: #e6ffda; }
.in.first { padding-top: 15px; border-top-left-radius: 0; }
.out.first { border-top-right-radius: 0; }
.first::before { content: ""; position: absolute; top: 0; width: 20px; height: 30px; background: inherit; }
.in.first::before { left: -20px; clip-path: path("M20 0H4Q-2 1 1 7L20 30Z"); }
.out.first::before { right: -20px; clip-path: path("M0 0H16Q22 1 19 7L0 30Z"); }
.name { display: block; margin-bottom: 13px; font-size: 43px; line-height: 50px; font-weight: 500; }
.fatma { color: #a5b337; }
.onur { color: #06a294; }
.row { display: flex; align-items: flex-end; justify-content: space-between; gap: 39px; }
.out .row { gap: 24px; }
.row p { padding-bottom: 11px; font-size: 48px; line-height: 57px; }
.row.stacked { flex-direction: column; justify-content: flex-start; gap: 11px; }
.stacked p { padding-right: 8px; }
a { color: #027eb5; text-decoration: none; }
time { flex: none; color: #667781; font-size: 36px; line-height: 42px; }
.meta { display: flex; flex: none; align-items: center; gap: 8px; }
.ticks { width: 46px; height: 30px; }
.emoji { display: inline-block; width: 66px; height: 66px; margin: 2px 2px 7px; vertical-align: -23px; }
.thumb { width: 144px; height: 112px; margin-bottom: 11px; }
.partial { width: 732px; height: 97px; }
.scrollbar { position: absolute; right: 0; top: 58.5%; width: 11px; height: 49px; background: #a5acac; }
.jump { position: absolute; right: 32px; bottom: 42px; width: 91px; height: 91px; border-radius: 50%; background: rgba(252, 252, 252, .88); box-shadow: 0 1px 4px rgba(11, 20, 26, .2); }
.jump svg { width: 91px; height: 91px; }

/* composer */
.composer { position: relative; display: flex; flex: none; align-items: center; gap: 14px; padding: 9px 12px 12px 14px; }
.field { display: flex; flex: 1; min-width: 0; align-items: center; height: 125px; padding: 0 36px 0 29px; border-radius: 63px; background: #fff; box-shadow: 0 2px 2px rgba(11, 20, 26, .2); }
.field svg { width: 60px; height: 60px; }
.field .cam { margin-left: 61px; }
.field input { flex: 1; min-width: 0; margin-left: 29px; border: 0; outline: 0; background: none; color: #111b21; font: 54px/64px Roboto, "Noto Sans", sans-serif; }
.field input::placeholder { color: #667781; opacity: 1; }
.mic { width: 129px; height: 129px; border-radius: 50%; background: #00a884; box-shadow: 0 3px 6px rgba(11, 20, 26, .3); }
.mic svg { width: 129px; height: 129px; }

/* system navigation */
.system { display: flex; flex: none; justify-content: center; align-items: center; gap: 190px; height: 130px; border-top: 1px solid #dcdcdc; background: #f7f8fa; }
.system svg { width: 60px; height: 60px; }
```
